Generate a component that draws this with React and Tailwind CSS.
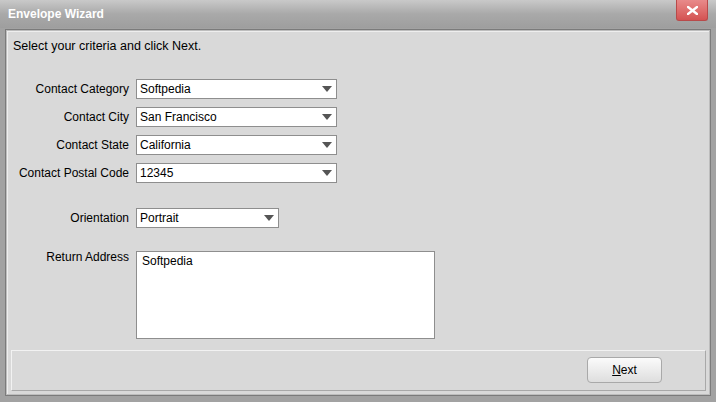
const font = { fontFamily: '"Liberation Sans", Arial, sans-serif' };

const Combo = ({ value, width }) => (
    <div className={`flex items-center justify-between h-[20px] ${width} bg-white border border-[#8e8e8e] pl-[3px] pr-[4px]`}>
        <span className="text-[12px] text-black leading-none">{value}</span>
        <svg width="10" height="6" viewBox="0 0 10 6">
            <polygon points="0,0 10,0 5,6" fill="#555" />
        </svg>
    </div>
);

const Row = ({ label, children }) => (
    <div className="flex items-center">
        <div className="w-[128px] text-right pr-[7px] text-[12px] text-black whitespace-nowrap">{label}</div>
        {children}
    </div>
);

export default function App() {
    return (
        <div style={font} className="w-[716px] h-[402px] bg-[#8f8f8f] flex flex-col overflow-hidden select-none">
            {/* Title bar */}
            <div className="relative h-[28px] shrink-0 bg-gradient-to-b from-[#c9c9c9] via-[#a9a9a9] to-[#9e9e9e] flex items-center px-[8px]">
                <span className="text-white font-bold text-[12px]">Envelope Wizard</span>
                <div className="absolute right-[8px] top-0 w-[32px] h-[21px] rounded-b-[3px] bg-gradient-to-b from-[#e88a8a] to-[#d45252] border border-[#b84a4a] border-t-0 flex items-center justify-center">
                    <svg width="11" height="9" viewBox="0 0 11 9">
                        <path d="M1 1 L10 8 M10 1 L1 8" stroke="white" strokeWidth="2.4" strokeLinecap="square" />
                    </svg>
                </div>
            </div>

            {/* Frame body */}
            <div className="flex-1 px-[5px] pb-[6px] pt-[1px] bg-[#a2a2a2]">
                <div className="h-full border border-[#7b7b7b] p-[1px] bg-[#bdbdbd]">
                    <div className="h-full bg-[#d9d9d9] border-l border-t border-[#eeeeee] flex flex-col">
                        <div className="text-[12.5px] text-black pl-[5px] pt-[5px]">Select your criteria and click Next.</div>

                        <div className="flex flex-col gap-[8px] mt-[23px]">
                            <Row label="Contact Category"><Combo value="Softpedia" width="w-[201px]" /></Row>
                            <Row label="Contact City"><Combo value="San Francisco" width="w-[201px]" /></Row>
                            <Row label="Contact State"><Combo value="California" width="w-[201px]" /></Row>
                            <Row label="Contact Postal Code"><Combo value="12345" width="w-[201px]" /></Row>
                        </div>

                        <div className="mt-[25px]">
                            <Row label="Orientation"><Combo value="Portrait" width="w-[143px]" /></Row>
                        </div>

                        <div className="flex items-start mt-[23px]">
                            <div className="w-[128px] text-right pr-[7px] text-[12px] leading-[12px] text-black">Return Address</div>
                            <div className="w-[299px] h-[88px] bg-white border border-[#8e8e8e] px-[5px] pt-[1px] text-[12px] leading-[16px] text-black">
                                Softpedia
                            </div>
                        </div>

                        <div className="mt-[11px] mx-[3px] h-[41px] border-t border-l border-[#f2f2f2] border-r border-b border-r-[#a8a8a8] border-b-[#a8a8a8] flex items-center justify-end pr-[43px]">
                            <button className="w-[75px] h-[26px] rounded-[4px] border border-[#a9a9a9] bg-gradient-to-b from-[#fbfbfb] to-[#dedede] text-[12px] text-black">
                                <span className="underline">N</span>ext
                            </button>
                        </div>
                    </div>
                </div>
            </div>
        </div>
    );
}
